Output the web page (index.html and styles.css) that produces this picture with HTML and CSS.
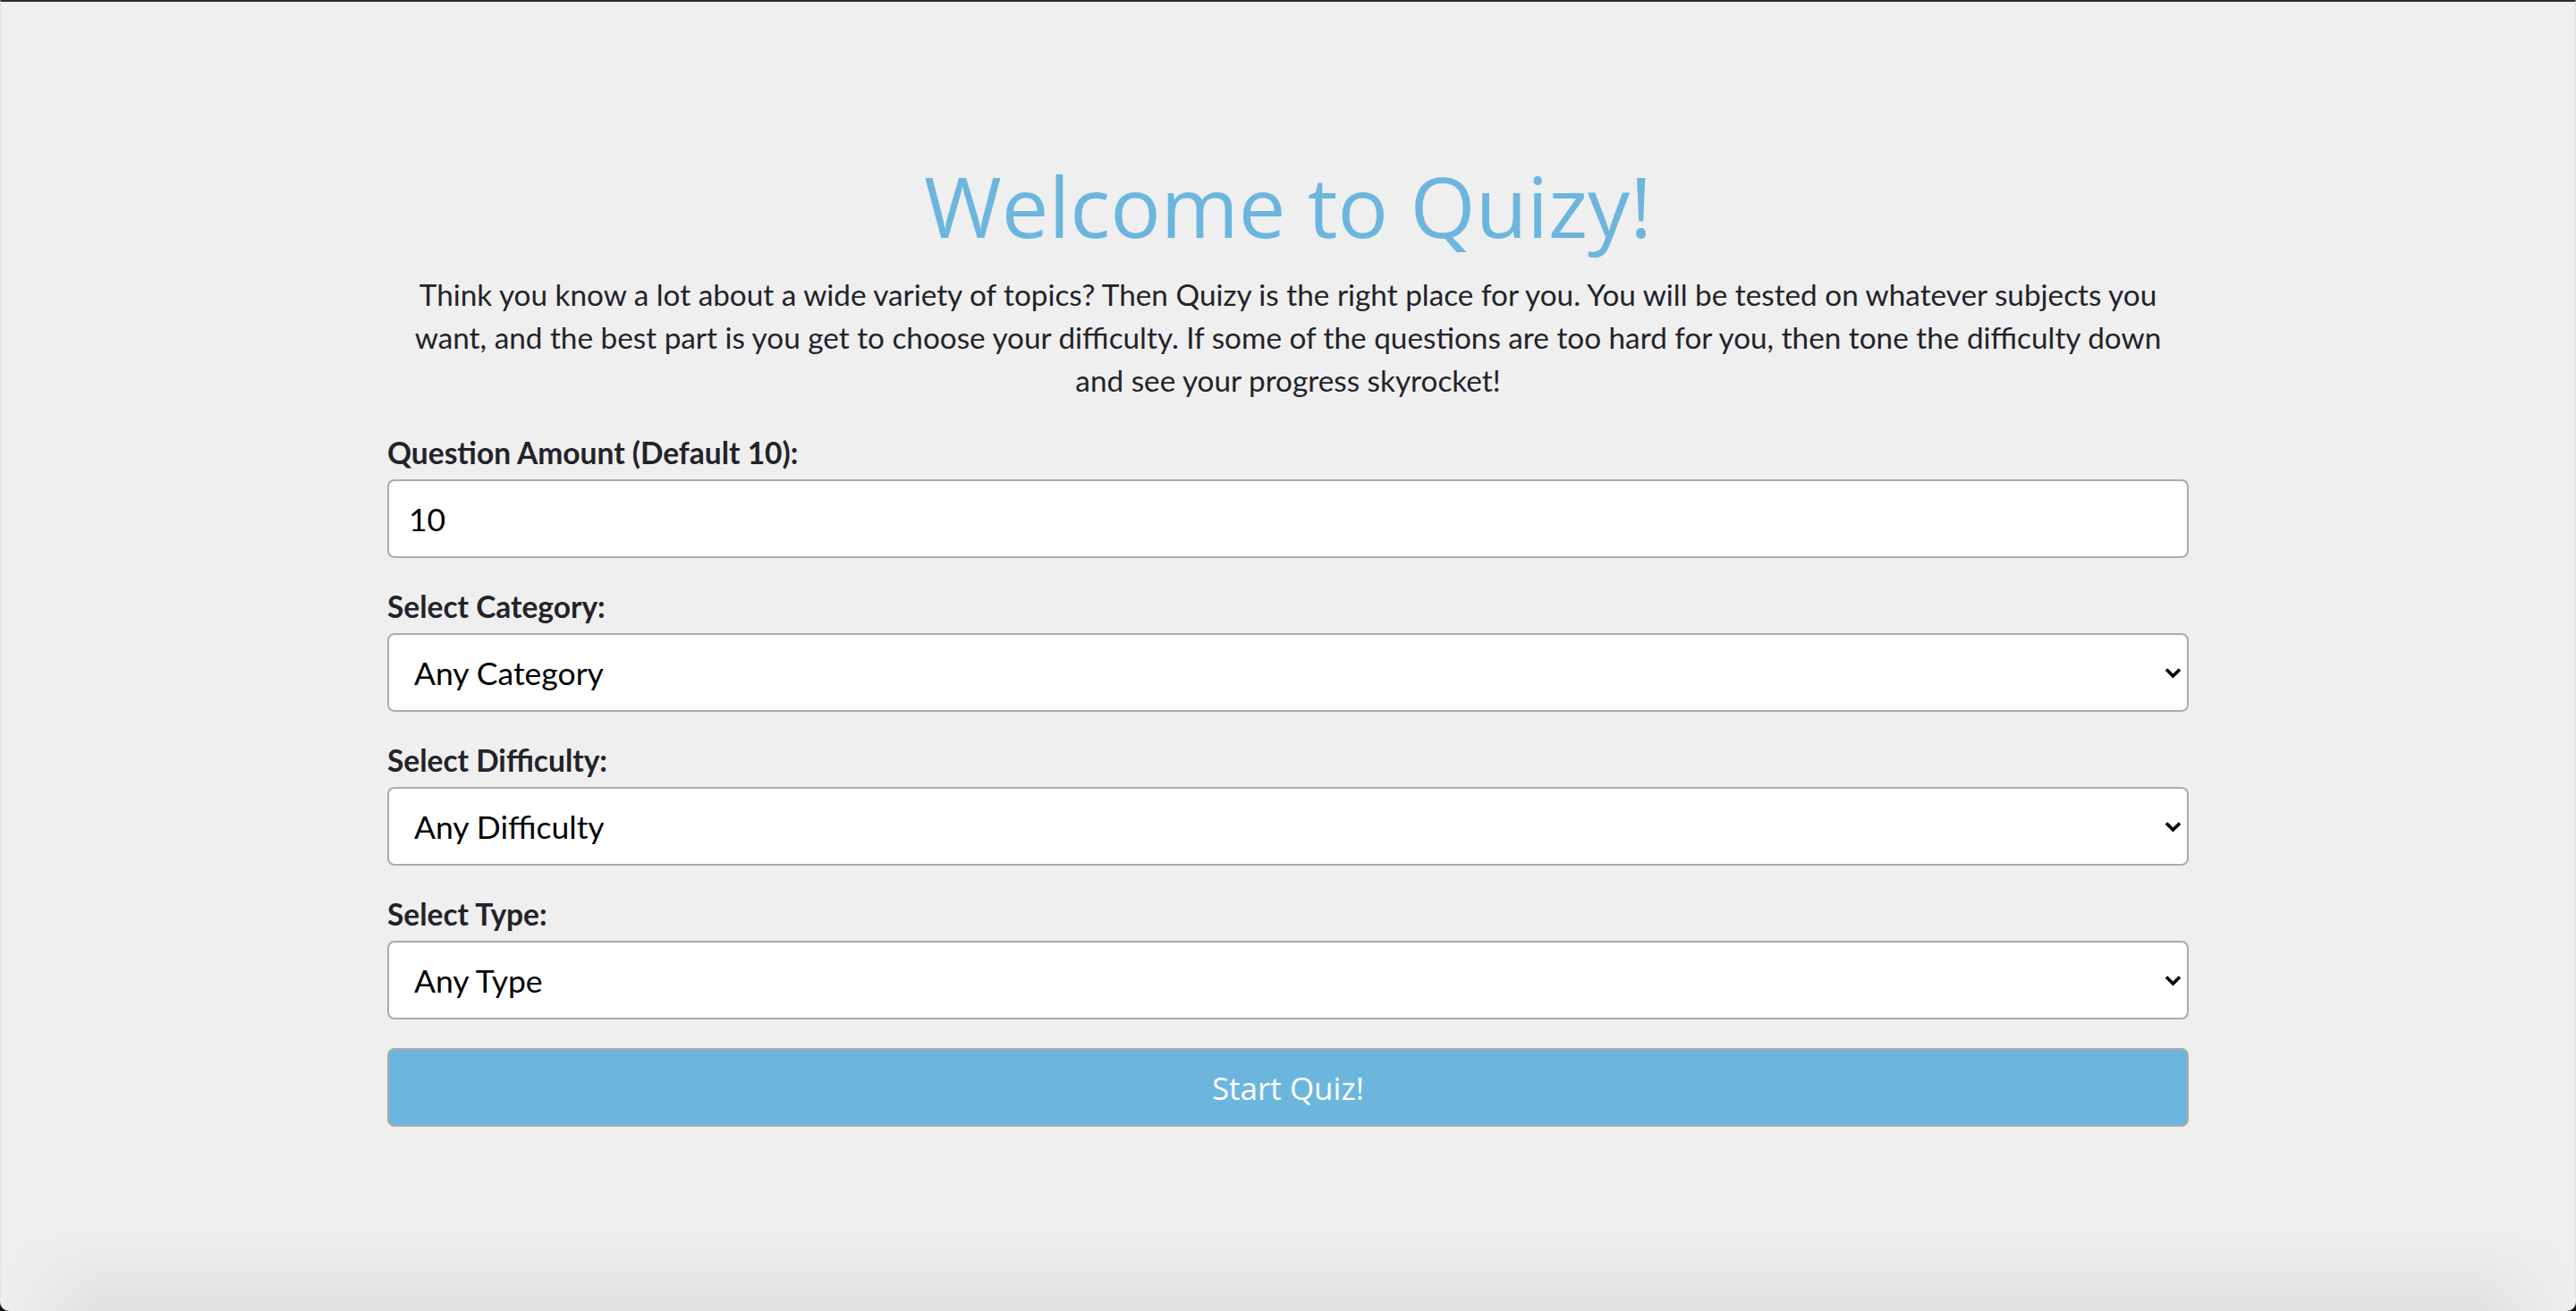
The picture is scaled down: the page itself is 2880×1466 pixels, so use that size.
FILE: index.html
```html
<!DOCTYPE html>
<html lang="en">
<head>
<meta charset="utf-8">
<title>Quizy</title>
<link rel="stylesheet" href="styles.css">
</head>
<body>
<div class="window">
  <main class="quiz">
    <h1 class="quiz__title">Welcome to Quizy!</h1>
    <p class="quiz__intro">Think you know a lot about a wide variety of topics? Then Quizy is the right place for you. You will be tested on whatever subjects you want, and the best part is you get to choose your difficulty. If some of the questions are too hard for you, then tone the difficulty down and see your progress skyrocket!</p>
    <form class="quiz__form">
      <label class="field__label" for="amount">Question Amount (Default 10):</label>
      <input class="field__control" id="amount" type="number" value="10">

      <label class="field__label" for="category">Select Category:</label>
      <select class="field__control field__control--select" id="category">
        <option>Any Category</option>
      </select>

      <label class="field__label" for="difficulty">Select Difficulty:</label>
      <select class="field__control field__control--select" id="difficulty">
        <option>Any Difficulty</option>
      </select>

      <label class="field__label" for="type">Select Type:</label>
      <select class="field__control field__control--select" id="type">
        <option>Any Type</option>
      </select>

      <button class="quiz__start" type="button">Start Quiz!</button>
    </form>
  </main>
</div>
</body>
</html>
```
FILE: styles.css
```css
* { box-sizing: border-box; }

html {
  background: #111;
}

body {
  margin: 0;
  font-family: Lato, "Open Sans", sans-serif;
  color: #23232a;
}

.window {
  position: relative;
  min-height: 1466px;
  background: #efefef;
  border-top: 2px solid #2b2b2b;
  border-left: 1px solid #e6e6e6;
  border-right: 1px solid #e6e6e6;
  border-radius: 0 0 10px 10px;
  overflow: hidden;
  padding-top: 171px;
}

.window::after {
  content: "";
  position: absolute;
  left: 0;
  right: 0;
  bottom: 0;
  height: 90px;
  background: linear-gradient(to bottom, rgba(0,0,0,0), rgba(0,0,0,0.06));
  -webkit-mask-image: linear-gradient(to right, transparent 0, #000 110px, #000 calc(100% - 110px), transparent 100%);
  mask-image: linear-gradient(to right, transparent 0, #000 110px, #000 calc(100% - 110px), transparent 100%);
  pointer-events: none;
}

.quiz {
  width: 2014px;
  margin: 0 auto;
}

.quiz__title {
  margin: 0;
  font-family: "Open Sans", sans-serif;
  font-weight: 400;
  font-size: 94px;
  line-height: 115px;
  text-align: center;
  color: #6cb6de;
}

.quiz__intro {
  margin: 17px 0 3px;
  padding: 0 12px;
  font-size: 33.3px;
  line-height: 48px;
  text-align: center;
  color: #23232a;
}

.quiz__form {
  display: flex;
  flex-direction: column;
}

.field__label {
  display: block;
  margin: 34px 0 10px;
  font-size: 33.5px;
  line-height: 40px;
  font-weight: 700;
  color: #23232a;
}

.field__control {
  display: block;
  width: 100%;
  height: 88px;
  margin: 0;
  padding: 0 22px;
  border: 2px solid #ababab;
  border-radius: 8px;
  background-color: #fff;
  font-family: Lato, "Open Sans", sans-serif;
  font-size: 35.5px;
  color: #000;
  outline: none;
}

.field__control--select {
  -webkit-appearance: none;
  appearance: none;
  padding-left: 28px;
  background-image: url("data:image/svg+xml,%3Csvg xmlns='http://www.w3.org/2000/svg' width='19' height='13' viewBox='0 0 19 13'%3E%3Cpath d='M2 2.5 L9.5 10 L17 2.5' fill='none' stroke='%23000' stroke-width='3.6'/%3E%3C/svg%3E");
  background-repeat: no-repeat;
  background-position: right 6px center;
  background-size: 19px 13px;
}

.quiz__start {
  margin-top: 32px;
  height: 88px;
  width: 100%;
  border: 2px solid #ababab;
  border-radius: 8px;
  background: #6cb6de;
  color: #fff;
  font-family: "Open Sans", sans-serif;
  font-size: 35px;
  cursor: pointer;
}
```
